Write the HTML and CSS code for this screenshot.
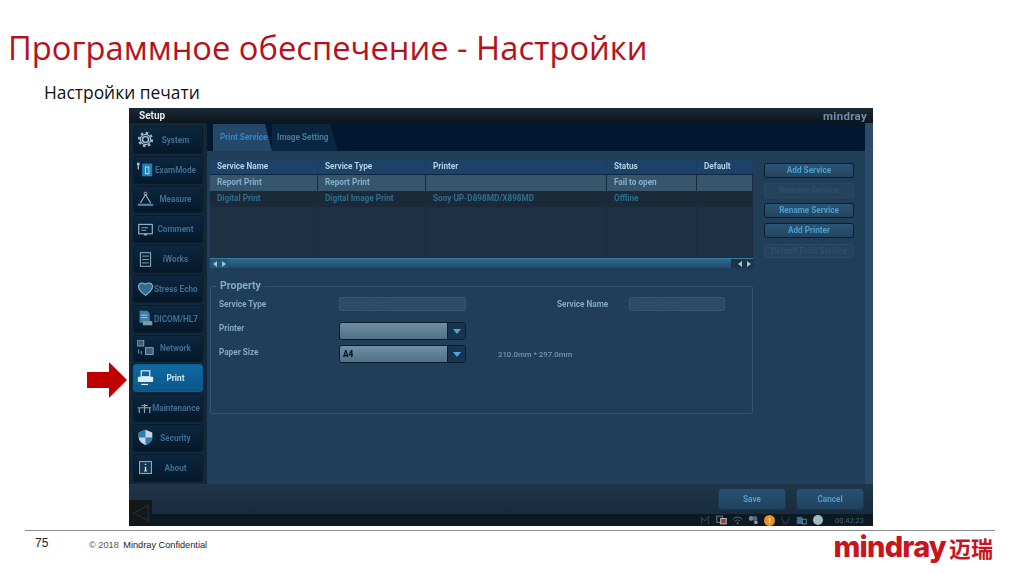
FILE: index.html
```html
<!DOCTYPE html>
<html lang="ru">
<head>
<meta charset="utf-8">
<title>Настройки печати</title>
<link rel="stylesheet" href="styles.css">
</head>
<body>
<div class="slide">
  <h1 class="title">Программное обеспечение - Настройки</h1>
  <h2 class="subtitle">Настройки печати</h2>
  <div class="app">
    <div class="titlebar"><span class="t-setup">Setup</span><span class="t-logo">mindray</span></div>
    <div class="main">
      <nav class="side">
        <div class="nav"><svg viewBox="0 0 20 20"><circle cx="10" cy="10" r="3.500" fill="none" stroke="#9db9ca" stroke-width="1.800"/><circle cx="10" cy="10" r="6" fill="none" stroke="#9db9ca" stroke-width="1.500"/><circle cx="10" cy="10" r="7.800" fill="none" stroke="#9db9ca" stroke-width="2.400" stroke-dasharray="3 3.130"/></svg><span>System</span></div>
        <div class="nav"><svg viewBox="0 0 20 20"><rect x="0" y="2" width="3" height="3" fill="#b5c6d0"/><path d="M1.500 5v5" stroke="#b5c6d0" stroke-width="1.500"/><rect x="6" y="3" width="12" height="15" fill="#1f7fb5"/><rect x="10" y="7" width="4" height="8" fill="none" stroke="#cfe3ee"/></svg><span>ExamMode</span></div>
        <div class="nav"><svg viewBox="0 0 20 20"><path d="M10 4 4 14M10 4l6 10" stroke="#a9bdca" fill="none" stroke-width="1.200"/><circle cx="10" cy="3" r="1.600" fill="none" stroke="#a9bdca"/><rect x="1" y="15" width="18" height="2.500" fill="#4f86ad"/></svg><span>Measure</span></div>
        <div class="nav"><svg viewBox="0 0 20 20"><rect x="2" y="4" width="16" height="11" fill="none" stroke="#8fb0c4" stroke-width="1.400"/><path d="M5 8h8M5 11h6" stroke="#8fb0c4"/><path d="M8 15h4v2H8z" fill="#8fb0c4"/></svg><span>Comment</span></div>
        <div class="nav"><svg viewBox="0 0 20 20"><rect x="4" y="2" width="12" height="16" fill="none" stroke="#8fb0c4" stroke-width="1.200"/><path d="M6 6h8M6 10h8M6 14h8" stroke="#8fb0c4"/></svg><span>iWorks</span></div>
        <div class="nav"><svg viewBox="0 0 20 20"><path d="M10 18C3 13 1 9 2 6c1-3 5-3 8-1 3-2 7-2 8 1 1 3-1 7-8 12z" fill="#2a6f8f" stroke="#9ab" stroke-width="1.300"/></svg><span>Stress Echo</span></div>
        <div class="nav"><svg viewBox="0 0 20 20"><path d="M3 1h9l3 3v11H3z" fill="#3f7fa6"/><rect x="7" y="13" width="11" height="5" fill="#7e98a8"/><path d="M5 6h7M5 9h7" stroke="#b5cfdd"/></svg><span>DICOM/HL7</span></div>
        <div class="nav"><svg viewBox="0 0 20 20"><rect x="0" y="0" width="8" height="7" fill="#3a5f7c" stroke="#8fb0c4" stroke-width="1"/><rect x="10" y="9" width="9" height="8" fill="#3a5f7c" stroke="#8fb0c4" stroke-width="1"/><path d="M2 11v5M5 13v4" stroke="#8fb0c4"/></svg><span>Network</span></div>
        <div class="nav nav-on"><svg viewBox="0 0 20 20"><rect x="5" y="1" width="10" height="7" fill="none" stroke="#e2eef5" stroke-width="1.400"/><rect x="1" y="8" width="18" height="6" rx="1" fill="#dfeaf1"/><path d="M5 17h8" stroke="#e2eef5" stroke-width="1.400"/></svg><span>Print</span></div>
        <div class="nav nav-wide"><svg viewBox="0 0 20 20"><path d="M1 9h18M3 9v7M17 9v7M10 4v12M6 6h8" stroke="#8fa6b4" stroke-width="1.500" fill="none"/></svg><span>Maintenance</span></div>
        <div class="nav"><svg viewBox="0 0 20 20"><path d="M10 1l8 3v6c0 4-4 7-8 9-4-2-8-5-8-9V4z" fill="#c4d6e0"/><path d="M10 1v9H2V4zM10 10h8c0 4-4 7-8 9z" fill="#2b7fae"/></svg><span>Security</span></div>
        <div class="nav"><svg viewBox="0 0 20 20"><rect x="3" y="3" width="14" height="14" fill="#16364f" stroke="#8fb0c4" stroke-width="1.200"/><path d="M10 5.500v1.500M10 9v5M8.500 14h3" stroke="#cfe0ea" stroke-width="1.600"/></svg><span>About</span></div>
      </nav>
      <section class="work">
        <div class="tabs">
          <div class="tab tab-on">Print Service</div>
          <div class="tab">Image Setting</div>
        </div>
        <div class="panel">
          <div class="upper">
            <div class="tablewrap">
              <div class="grid head"><span>Service Name</span><span>Service Type</span><span>Printer</span><span>Status</span><span>Default</span></div>
              <div class="grid row row-sel"><span>Report Print</span><span>Report Print</span><span></span><span>Fail to open</span><span></span></div>
              <div class="grid row row-alt"><span>Digital Print</span><span>Digital Image Print</span><span>Sony UP-D898MD/X898MD</span><span>Offline</span><span></span></div>
              <div class="grid fill"><span></span><span></span><span></span><span></span><span></span></div>
              <div class="scroll">
                <i class="arr l"></i><i class="arr r"></i>
                <div class="track"></div>
                <div class="scroll-end"><i class="arr l"></i><i class="arr r"></i></div>
              </div>
            </div>
            <div class="actions">
              <div class="btn">Add Service</div>
              <div class="btn off">Remove Service</div>
              <div class="btn">Rename Service</div>
              <div class="btn">Add Printer</div>
              <div class="btn off last">Default Print Service</div>
            </div>
          </div>
          <div class="property">
            <div class="legend">Property</div>
            <div class="prow prow1">
              <label>Service Type</label><div class="ro">Report Print</div>
              <label class="lab2">Service Name</label><div class="ro ro2">Report Print</div>
            </div>
            <div class="prow prow2">
              <label>Printer</label><div class="combo"><b></b><i></i></div>
            </div>
            <div class="prow prow3">
              <label>Paper Size</label><div class="combo"><b>A4</b><i></i></div><span class="dim">210.0mm * 297.0mm</span>
            </div>
          </div>
        </div>
      </section>
      <div class="edge"></div>
    </div>
    <div class="bottom">
      <div class="bigbtn">Save</div>
      <div class="bigbtn">Cancel</div>
    </div>
    <div class="status">
      <svg class="st" viewBox="0 0 14 12"><path d="M2 11V3l4 4 5-5v9" fill="none" stroke="#2a4454" stroke-width="1.300"/></svg>
      <svg class="st" viewBox="0 0 14 12"><rect x="1" y="1" width="7" height="8" fill="none" stroke="#7d98a8"/><rect x="6" y="4" width="7" height="7" fill="#a83a3a" stroke="#cdd"/></svg>
      <svg class="st" viewBox="0 0 14 12"><path d="M1 5a8 8 0 0 1 12 0M3.500 7.500a5 5 0 0 1 7 0" fill="none" stroke="#5d7888"/><circle cx="7" cy="10" r="1.200" fill="#5d7888"/></svg>
      <svg class="st" viewBox="0 0 14 12"><circle cx="4" cy="4" r="3" fill="#6d8896"/><circle cx="9" cy="4" r="3" fill="#4f6a78"/><rect x="8" y="7" width="4" height="4" fill="#8aa"/></svg>
      <span class="warn">!</span>
      <svg class="st" viewBox="0 0 14 12"><path d="M2 2l3 8h4l3-8" fill="none" stroke="#203c4c" stroke-width="1.500"/></svg>
      <svg class="st" viewBox="0 0 14 12"><rect x="1" y="2" width="7" height="9" fill="#3d6f92"/><rect x="8" y="5" width="5" height="6" fill="none" stroke="#7d98a8"/></svg>
      <span class="dot"></span>
      <span class="clock">00:42:23</span>
    </div>
    <svg class="back" viewBox="0 0 22 24"><path d="M20 3 3 12l17 9z" fill="none" stroke="#222c30" stroke-width="1.500"/></svg>
  </div>
  <footer class="foot">
    <span class="pnum">75</span>
    <span class="copy"><span class="c1">© 2018</span> Mindray Confidential</span>
    <span class="brand"><span class="bm">mindray</span><span class="bc">迈瑞</span></span>
  </footer>
  <svg class="pointer" viewBox="0 0 40 36"><path d="M0 10h22V0l18 18-18 18V26H0z" fill="#c00000"/></svg>
</div>
</body>
</html>
```
FILE: styles.css
```css
* { box-sizing: border-box; }
html, body { margin: 0; padding: 0; background: #fff; }
.slide { position: relative; width: 1024px; height: 574px; overflow: hidden; font-family: "Roboto", "Liberation Sans", sans-serif; }
.title { margin: 0; padding: 27px 0 0 8px; height: 80px; font: 400 32.700px/42px "Open Sans", sans-serif; color: #b5121b; white-space: nowrap; }
.subtitle { margin: 0; padding-left: 44px; height: 28px; font: 400 17.400px/24px "Open Sans", sans-serif; color: #111; }

.app { position: relative; margin-left: 129px; width: 744px; height: 418px; display: flex; flex-direction: column; background: #1d3043; filter: blur(.35px); }
.titlebar { height: 15px; flex: none; display: flex; justify-content: space-between; align-items: center; padding: 0 6px 0 10px; background: linear-gradient(#1c2a36, #0b151e); }
.t-setup { color: #dfe8ee; font-weight: 700; font-size: 10px; }
.t-logo { color: #6f8ea3; font-weight: 700; font-size: 11.500px; letter-spacing: .3px; }

.main { flex: 1; min-height: 0; display: flex; }
.side { width: 78px; flex: none; padding: 3px 4px 0; display: flex; flex-direction: column; gap: 2px; background: #12283a; }
.nav { height: 27.800px; flex: none; display: flex; align-items: center; padding: 0 5px 0 3px; background: linear-gradient(#0c2740, #05182a); border: 1px solid #0a1b29; border-radius: 3px; font-size: 8.200px; font-weight: 700; color: #3f6c92; }
.nav svg { width: 17px; height: 17px; flex: none; }
.nav span { flex: 1; text-align: center; white-space: nowrap; }
.nav-on { background: linear-gradient(#0f6aa2, #0b5688); color: #cfe6f4; border-color: #0d5d90; }
.nav-wide { padding-right: 2px; }
.nav-wide svg { width: 15px; }

.work { flex: 1; min-width: 0; display: flex; flex-direction: column; }
.tabs { height: 28px; flex: none; display: flex; padding-left: 6px; background: #021830; align-items: flex-end; }
.tab { height: 27px; padding: 0 9px 2px 5px; display: flex; align-items: center; color: #447a9f; font-size: 8.200px; font-weight: 700; background: #0a2540; clip-path: polygon(0 0, 88% 0, 100% 100%, 0 100%); white-space: nowrap; }
.tab-on { width: 59px; padding-left: 7px; color: #2f86c8; background: #24486a; }
.tab:last-child { width: 66px; margin-left: 0; }
.panel { flex: 1; min-height: 0; padding: 9px 0 0 3px; background: #213e58; display: flex; flex-direction: column; }
.upper { display: flex; height: 108px; flex: none; }
.tablewrap { width: 543px; flex: none; display: flex; flex-direction: column; }
.grid { display: grid; grid-template-columns: 108px 108px 181px 90px 56px; }
.grid span { padding-left: 7px; white-space: nowrap; overflow: hidden; border-right: 1px solid #1a2c3e; }
.head { height: 15px; line-height: 12px; background: #1c4268; border-bottom: 1px solid #10263c; color: #b5cfe0; font-size: 8.200px; font-weight: 700; }
.head span { border-right-color: #1c3d5e; }
.row { height: 16px; line-height: 14px; font-size: 8.200px; font-weight: 700; }
.row-sel { background: #37566c; color: #7fb1d0; }
.row-alt { background: #1a2a38; color: #2f6d8f; }
.fill { flex: 1; background: #1e3144; }
.scroll { height: 10px; flex: none; display: flex; align-items: center; background: #24557a; border-top: 1px solid #3a7a9f; }
.track { flex: 1; height: 100%; background: linear-gradient(#2f6a8f, #1e4a6c); }
.scroll-end { width: 22px; height: 100%; display: flex; justify-content: flex-end; align-items: center; background: #1c3346; }
.arr { width: 9px; height: 9px; flex: none; display: flex; align-items: center; justify-content: center; }
.arr::before { content: ""; border: 3px solid transparent; }
.arr.l::before { border-right: 4px solid #9fc3d8; border-left: 0; }
.arr.r::before { border-left: 4px solid #9fc3d8; border-right: 0; }
.actions { width: 101px; margin-left: 11px; padding-top: 3px; display: flex; flex-direction: column; gap: 5px; }
.btn { width: 90px; height: 15px; line-height: 12px; text-align: center; font-size: 8.200px; font-weight: 700; color: #4a9fd0; background: linear-gradient(#2d5474, #23455f); border: 1px solid #0c1e2e; border-radius: 3px; white-space: nowrap; }
.btn.off { color: #2c506b; background: #26425b; border-color: #2a4a64; }
.btn.last { margin-top: 1px; height: 14px; }
.property { position: relative; margin-top: 18px; width: 543px; height: 128px; border: 1px solid #35536c; border-radius: 2px; font-size: 8.200px; font-weight: 700; color: #82a8c2; }
.legend { position: absolute; left: 5px; top: -8px; padding: 0 4px; background: #213e58; font-size: 10.500px; font-weight: 700; line-height: 13px; color: #7faac8; }
.prow { position: absolute; left: 8px; right: 0; display: flex; align-items: center; }
.prow label { width: 120px; flex: none; }
.prow2 label { align-self: flex-start; line-height: 12px; }
.prow3 label { align-self: flex-start; line-height: 14px; }
.prow1 { top: 10px; }
.prow2 { top: 35px; }
.prow3 { top: 58px; }
.ro { width: 127px; height: 14px; padding-left: 2px; line-height: 12px; color: #344f66; background: #2c4a63; border: 1px solid #365570; border-radius: 2px; }
.prow .lab2 { width: 72px; margin-left: 91px; }
.ro2 { width: 96px; }
.combo { width: 127px; height: 18px; display: flex; border: 1px solid #0c1e2e; border-radius: 3px; overflow: hidden; }
.combo b { flex: 1; background: linear-gradient(#6e8fa4, #4f7085); color: #061320; line-height: 16px; padding-left: 3px; }
.combo i { width: 18px; display: flex; align-items: center; justify-content: center; background: #173350; border-left: 1px solid #0c1e2e; }
.combo i::before { content: ""; border: 4px solid transparent; border-top: 5px solid #4fa6d8; border-bottom: 0; }
.dim { margin-left: 32px; font-size: 7.800px; font-weight: 500; color: #6f96b0; }
.edge { width: 8px; flex: none; background: #2a4a68; }

.bottom { height: 30px; flex: none; display: flex; justify-content: flex-end; align-items: center; gap: 10px; padding: 0 9px 0 0; background: linear-gradient(#1f3548, #182c3e); }
.bigbtn { width: 68px; height: 22px; line-height: 20px; text-align: center; font-size: 8.200px; font-weight: 700; color: #4a9fd0; background: linear-gradient(#2a5070, #1f4260); border: 1px solid #1a3a54; border-radius: 4px; }
.status { height: 12px; flex: none; display: flex; justify-content: flex-end; align-items: center; gap: 5px; padding-right: 9px; background: #0d1a24; }
.st { width: 11px; height: 10px; flex: none; }
.warn { width: 11px; height: 11px; flex: none; border-radius: 50%; background: #e5922a; color: #fff; font-size: 8px; line-height: 11px; font-weight: 700; text-align: center; }
.dot { width: 10px; height: 10px; flex: none; border-radius: 50%; background: #9fbcc4; margin-left: 1px; margin-right: 7px; }
.clock { color: #44606f; font-size: 7.500px; }
.back { position: absolute; left: 0; bottom: 0; width: 23px; height: 26px; background: #12171a; padding: 2px; }

.foot { position: relative; margin: 4px 29px 0 25px; height: 40px; border-top: 1px solid #8a8a8a; display: flex; align-items: flex-start; font-family: "Liberation Sans", sans-serif; color: #222; }
.pnum { margin: 5px 0 0 10px; width: 54px; font-size: 12px; }
.copy { margin-top: 9px; font-size: 9.200px; }
.c1 { margin-right: 2px; color: #555; }
.brand { margin-left: auto; padding-right: 2px; display: flex; align-items: center; color: #c8141e; height: 32px; }
.bm { font: 800 29px/32px "Inter", sans-serif; letter-spacing: -.8px; }
.bc { margin-left: 3px; font: 700 22px/32px "Noto Sans CJK SC", sans-serif; }
.pointer { position: absolute; left: 87px; top: 362px; width: 40px; height: 36px; }
```
